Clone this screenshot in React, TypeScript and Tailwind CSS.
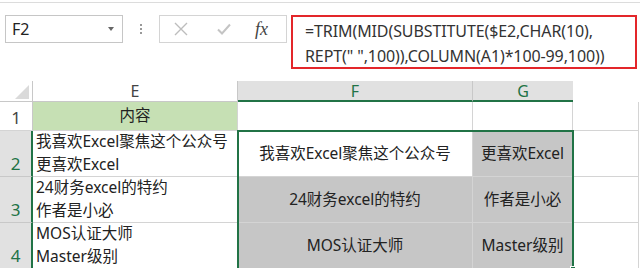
import React from "react";

const GRID = "border-[#d4d4d4]";
const SEL_GRAY = "bg-[#c6c6c6]";

const Cell = ({ className = "", children }: { className?: string; children?: React.ReactNode }) => (
  <div className={`border-r border-b ${GRID} ${className}`}>{children}</div>
);

const RowHead = ({ n, selected }: { n: number; selected?: boolean }) => (
  <div
    className={`flex items-end justify-center pb-[1px] text-[17px] leading-[22px] border-b ${
      selected
        ? "bg-[#e1e1e1] text-[#217346] border-r-2 border-r-[#217346] border-b-[#c8c8c8]"
        : "bg-white text-[#444] border-r border-r-[#c8c8c8] border-b-[#d4d4d4]"
    }`}
  >
    {n}
  </div>
);

const App = () => {
  return (
    <div
      className="w-[640px] h-[268px] bg-white overflow-hidden relative text-[#222]"
      style={{ fontFamily: '"Noto Sans", "Noto Sans CJK SC", sans-serif' }}
    >
      {/* top rule */}
      <div className="h-[3px] border-b border-[#dcdcdc]" />

      {/* formula bar */}
      <div className="flex items-start pt-[12px] h-[78px]">
        <div className="ml-[5px] w-[118px] h-[28px] border border-[#c6c6c6] flex items-center justify-between pl-[6px] pr-[8px]">
          <span className="text-[16px] text-[#222]">F2</span>
          <span className="w-0 h-0 border-l-[3px] border-r-[3px] border-t-[4px] border-l-transparent border-r-transparent border-t-[#666]" />
        </div>
        <div className="ml-[17px] mt-[9px] flex flex-col gap-[2px]">
          <span className="w-[2px] h-[2px] bg-[#999]" />
          <span className="w-[2px] h-[2px] bg-[#999]" />
          <span className="w-[2px] h-[2px] bg-[#999]" />
        </div>
        <div className="ml-[17px] w-[128px] h-[28px] border border-[#d4d4d4] flex items-center">
          <svg className="ml-[14px]" width="14" height="14" viewBox="0 0 14 14">
            <path d="M1 1 L13 13 M13 1 L1 13" stroke="#bdbdbd" strokeWidth="1.4" fill="none" />
          </svg>
          <svg className="ml-[29px]" width="14" height="12" viewBox="0 0 14 12">
            <path d="M1 6.5 L5 10.5 L13 1.5" stroke="#c4c4c4" strokeWidth="2" fill="none" />
          </svg>
          <span
            className="ml-[24px] text-[18px] italic text-[#444]"
            style={{ fontFamily: '"Liberation Serif", serif' }}
          >
            fx
          </span>
        </div>
        <div className="ml-[4px] w-[346px] h-[54px] border-2 border-[#e3262a] pl-[12px] pt-[2px] text-[16px] leading-[25px] text-[#333] tracking-[-0.1px]">
          <div>=TRIM(MID(SUBSTITUTE($E2,CHAR(10),</div>
          <div>REPT(&quot; &quot;,100)),COLUMN(A1)*100-99,100))</div>
        </div>
      </div>

      {/* sheet */}
      <div className="relative">
        <div className="grid grid-cols-[33px_205px_235px_100px_1fr] grid-rows-[21px_29px_46px_46px_46px] text-[15.5px]">
          {/* header row */}
          <div className="bg-white border-r border-b border-[#c8c8c8] flex items-end justify-end pr-[3px] pb-[2px]">
            <svg width="14" height="14" viewBox="0 0 14 14">
              <path d="M14 0 L14 14 L0 14 Z" fill="#dadada" />
            </svg>
          </div>
          <div className="bg-white border-r border-b border-[#c8c8c8] flex items-center justify-center text-[16px] text-[#444]">
            E
          </div>
          <div className="bg-[#e1e1e1] border-r border-r-[#c8c8c8] border-b-2 border-b-[#217346] flex items-center justify-center text-[16px] text-[#217346]">
            F
          </div>
          <div className="bg-[#e1e1e1] border-b-2 border-b-[#217346] flex items-center justify-center text-[16px] text-[#217346]">
            G
          </div>
          <div className="bg-white" />

          {/* row 1 */}
          <RowHead n={1} />
          <Cell className="bg-[#c6e0b4] flex items-center justify-center">内容</Cell>
          <Cell />
          <Cell />
          <Cell className="mr-[1px]" />

          {/* row 2 */}
          <RowHead n={2} selected />
          <Cell className="flex flex-col justify-end pl-[3px] leading-[23px]">
            <div>我喜欢Excel聚焦这个公众号</div>
            <div>更喜欢Excel</div>
          </Cell>
          <Cell className="flex items-center justify-center">我喜欢Excel聚焦这个公众号</Cell>
          <Cell className={`${SEL_GRAY} flex items-center justify-center`}>更喜欢Excel</Cell>
          <Cell className="mr-[1px]" />

          {/* row 3 */}
          <RowHead n={3} selected />
          <Cell className="flex flex-col justify-end pl-[3px] leading-[23px]">
            <div>24财务excel的特约</div>
            <div>作者是小必</div>
          </Cell>
          <Cell className={`${SEL_GRAY} flex items-center justify-center`}>24财务excel的特约</Cell>
          <Cell className={`${SEL_GRAY} flex items-center justify-center`}>作者是小必</Cell>
          <Cell className="mr-[1px]" />

          {/* row 4 */}
          <RowHead n={4} selected />
          <Cell className="flex flex-col justify-end pl-[3px] leading-[23px]">
            <div>MOS认证大师</div>
            <div>Master级别</div>
          </Cell>
          <Cell className={`${SEL_GRAY} flex items-center justify-center`}>MOS认证大师</Cell>
          <Cell className={`${SEL_GRAY} flex items-center justify-center`}>Master级别</Cell>
          <Cell className="mr-[1px]" />
        </div>

        {/* selection border F2:G4 */}
        <div className="absolute left-[237px] top-[49px] w-[337px] h-[140px] border-2 border-[#217346] pointer-events-none" />
        <div className="absolute left-[570px] top-[185px] w-[6px] h-[6px] bg-[#217346] border border-white" />
      </div>
    </div>
  );
};

export default App;
